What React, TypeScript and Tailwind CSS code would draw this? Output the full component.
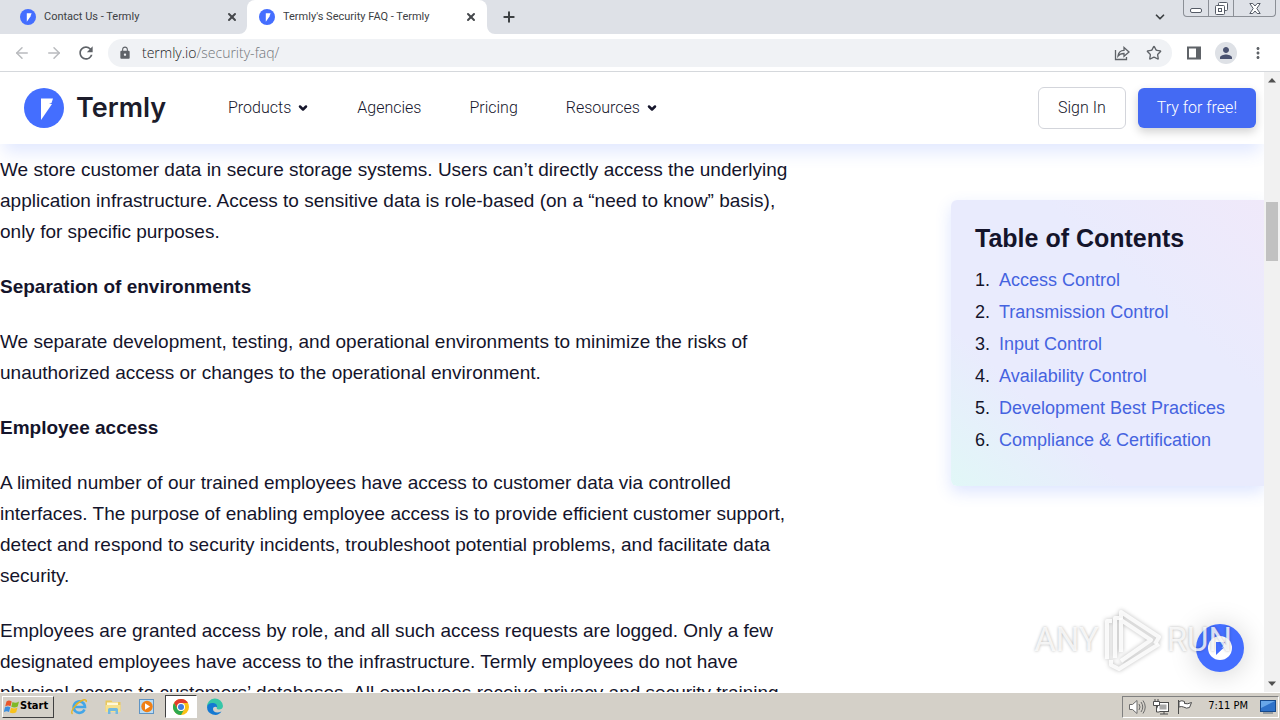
import React from 'react';
import { ArrowLeft, ArrowRight, Plus, X, ChevronDown, Star } from 'lucide-react';
import { MdRefresh, MdLock, MdPerson, MdMoreVert } from 'react-icons/md';

const tocItems = [
  { label: 'Access Control', href: '#access-control' },
  { label: 'Transmission Control', href: '#transmission-control' },
  { label: 'Input Control', href: '#input-control' },
  { label: 'Availability Control', href: '#availability-control' },
  { label: 'Development Best Practices', href: '#best-practices' },
  { label: 'Compliance & Certification', href: '#compliance' },
];

const navItems = [
  { label: 'Products', menu: true },
  { label: 'Agencies', menu: false },
  { label: 'Pricing', menu: false },
  { label: 'Resources', menu: true },
];

function TermlyMark({ className }: { className: string }) {
  return (
    <svg viewBox="0 0 40 40" className={className} aria-hidden="true">
      <circle cx="20" cy="20" r="20" fill="#446eff" />
      <path d="M17 10.500h12l-1.500 4.500-2.500 1h3L17 32z" fill="#fff" />
    </svg>
  );
}

function Tab({ title, active }: { title: string; active?: boolean }) {
  return (
    <div
      className={`relative flex items-center h-full w-60 shrink-0 pl-3 pr-[10px] ${
        active ? 'bg-white rounded-t-lg' : ''
      }`}
    >
      {active && (
        <>
          <svg viewBox="0 0 8 8" className="absolute bottom-0 -left-2 w-2 h-2 fill-white">
            <path d="M8 0v8H0a8 8 0 0 0 8-8z" />
          </svg>
          <svg viewBox="0 0 8 8" className="absolute bottom-0 -right-2 w-2 h-2 fill-white">
            <path d="M0 0v8h8a8 8 0 0 1-8-8z" />
          </svg>
        </>
      )}
      <TermlyMark className="w-4 h-4 mr-2 shrink-0" />
      <span className="flex-1 truncate text-[11px] text-[#3c4043] font-['Roboto',sans-serif]">{title}</span>
      <button aria-label="Close tab" className="text-[#45484c]">
        <X className="w-3 h-3" strokeWidth={4} />
      </button>
    </div>
  );
}

function WindowControls() {
  return (
    <div className="flex h-[17px] mr-1 border border-t-0 border-[#8b8f96] rounded-b-[4px] divide-x divide-[#8b8f96]">
      <button aria-label="Minimize" className="w-[25px] flex items-center justify-center">
        <svg viewBox="0 0 12 12" className="w-3 h-3" fill="#fff" stroke="#555b66">
          <rect x=".5" y="6.500" width="11" height="4" rx="1.500" />
        </svg>
      </button>
      <button aria-label="Restore" className="w-[25px] flex items-center justify-center">
        <svg viewBox="0 0 13 13" className="w-[13px] h-[13px]" fill="#fff" stroke="#555b66">
          <rect x="3.500" y=".5" width="9" height="8" rx="1" />
          <rect x=".5" y="3.500" width="9" height="9" rx="1" />
          <rect x="3.500" y="6.500" width="3" height="3" />
        </svg>
      </button>
      <button aria-label="Close" className="w-[41px] flex items-center justify-center">
        <svg viewBox="0 0 12 11" className="w-3 h-[11px]" fill="#fff" stroke="#555b66">
          <path d="M.8.5h3L6 3l2.200-2.500h3L7.800 5.500l3.400 5h-3L6 8l-2.200 2.500h-3l3.400-5z" />
        </svg>
      </button>
    </div>
  );
}

function BrowserBar() {
  return (
    <div className="shrink-0">
      <div className="flex h-[34px] bg-[#dee1e7]">
        <div className="flex pl-2 flex-1 min-w-0">
          <Tab title="Contact Us - Termly" />
          <div className="-ml-px">
            <Tab title="Termly's Security FAQ - Termly" active />
          </div>
          <button aria-label="New tab" className="ml-[14px] text-[#3c4043]">
            <Plus className="w-4 h-4" strokeWidth={3} />
          </button>
        </div>
        <button aria-label="Search tabs" className="mr-4 text-[#3c4043]">
          <ChevronDown className="w-[14px] h-[14px]" strokeWidth={3} />
        </button>
        <WindowControls />
      </div>

      <div className="flex items-center h-[38px] pl-3 pr-[13px] bg-white border-b border-[#d5d8dc] text-[#5f6368]">
        <button aria-label="Back" className="w-5 mr-3 flex justify-center text-[#b9bbbe]">
          <ArrowLeft className="w-[18px] h-[18px]" />
        </button>
        <button aria-label="Forward" className="w-5 mr-3 flex justify-center text-[#b9bbbe]">
          <ArrowRight className="w-[18px] h-[18px]" />
        </button>
        <button aria-label="Reload" className="w-5 mr-3 flex justify-center">
          <MdRefresh className="w-5 h-5" />
        </button>
        <div className="flex flex-1 items-center h-7 px-[10px] rounded-full bg-[#f0f2f5]">
          <MdLock className="w-[14px] h-[14px] mr-[10px]" />
          <a
            href="#url"
            className="flex-1 text-sm font-light text-[#70757a] font-['Open_Sans',sans-serif]"
          >
            <span className="text-[#202124]">termly.io</span>/security-faq/
          </a>
          <button aria-label="Share" className="mr-4">
            <svg viewBox="0 0 16 16" className="w-4 h-4" fill="none" stroke="currentColor" strokeWidth="1.3">
              <path d="M1.500 5v9.500h11V12" />
              <path d="M4 11c.5-4 2.500-5.500 6-5.600V2.500L15 7l-5 4.300V8.500C7.500 8.500 5.500 9 4 11z" />
            </svg>
          </button>
          <button aria-label="Bookmark">
            <Star className="w-4 h-4" strokeWidth={2} />
          </button>
        </div>
        <button aria-label="Side panel" className="ml-[14px] mr-[13px]">
          <svg viewBox="0 0 16 16" className="w-4 h-4" fill="currentColor">
            <path d="M1 1.500h14v13H1zM3 3.500v9h7v-9z" fillRule="evenodd" />
          </svg>
        </button>
        <button
          aria-label="Profile"
          className="w-[22px] h-[22px] rounded-full bg-[#dee1e6] text-[#4a5270] flex items-center justify-center"
        >
          <MdPerson className="w-[18px] h-[18px]" />
        </button>
        <button aria-label="Menu" className="ml-3">
          <MdMoreVert className="w-[18px] h-[18px]" />
        </button>
      </div>
    </div>
  );
}

function SiteHeader() {
  return (
    <header className="relative z-10 flex items-center h-[72px] shrink-0 pl-6 pr-2 bg-white shadow-[0_12px_16px_-4px_rgba(68,110,255,0.16)] font-light text-[#15152b] font-['Roboto',sans-serif]">
      <a href="#home" className="flex items-center w-[204px] shrink-0">
        <TermlyMark className="w-10 h-10 mr-3" />
        <span className="text-[27px] leading-8 font-semibold text-[#1c1c2b] font-['Inter',sans-serif]">Termly</span>
      </a>
      <nav className="flex flex-1 gap-12 text-base">
        {navItems.map((item) =>
          item.menu ? (
            <button key={item.label} className="flex items-center gap-[6px]">
              {item.label}
              <ChevronDown className="w-3 h-3" strokeWidth={5} />
            </button>
          ) : (
            <a key={item.label} href={`#${item.label.toLowerCase()}`}>
              {item.label}
            </a>
          )
        )}
      </nav>
      <a href="#sign-in" className="border border-[#d3d5db] rounded-md px-[19px] py-2 mr-3 text-base">
        Sign In
      </a>
      <a href="#try" className="rounded-md px-[19px] py-2 text-base text-white bg-[#446af3] shadow-[0_4px_10px_rgba(0,0,0,0.18)]">
        Try for free!
      </a>
    </header>
  );
}

function Article() {
  return (
    <article className="flex flex-col gap-6 flex-1 max-w-[800px] pt-[10px] text-[19px] leading-[31px] text-[#14142b]">
      <p>
        We store customer data in secure storage systems. Users can’t directly access the underlying
        application infrastructure. Access to sensitive data is role-based (on a “need to know” basis),
        only for specific purposes.
      </p>
      <h3 className="font-bold">Separation of environments</h3>
      <p>
        We separate development, testing, and operational environments to minimize the risks of
        unauthorized access or changes to the operational environment.
      </p>
      <h3 className="font-bold">Employee access</h3>
      <p>
        A limited number of our trained employees have access to customer data via controlled
        interfaces. The purpose of enabling employee access is to provide efficient customer support,
        detect and respond to security incidents, troubleshoot potential problems, and facilitate data
        security.
      </p>
      <p>
        Employees are granted access by role, and all such access requests are logged. Only a few
        designated employees have access to the infrastructure. Termly employees do not have
        physical access to customers’ databases. All employees receive privacy and security training
      </p>
    </article>
  );
}

function TableOfContents() {
  return (
    <aside className="w-[313px] shrink-0 mt-14 h-[286px] pl-6 pt-5 rounded-l-md shadow-[0_6px_16px_rgba(68,110,255,0.18)] bg-[linear-gradient(to_top_right,#e1f7f7_0%,#e9ebfd_28%,#e9ebfd_65%,#f0e9fa_100%)]">
      <h2 className="text-[25px] leading-9 font-bold text-[#14142b] mb-2">Table of Contents</h2>
      <ol className="text-[18px] leading-8 text-[#14142b]">
        {tocItems.map((item, i) => (
          <li key={item.href} className="flex">
            <span className="w-6">{i + 1}.</span>
            <a href={item.href} className="text-[#4563e0]">
              {item.label}
            </a>
          </li>
        ))}
      </ol>
    </aside>
  );
}

function Scrollbar() {
  return (
    <div className="flex flex-col items-center justify-between w-4 shrink-0 py-[6px] bg-[#f1f1f1]">
      <svg viewBox="0 0 8 5" className="w-2 h-[5px]" fill="#505050">
        <path d="M4 0l4 4.500H0z" />
      </svg>
      <div className="flex-1 flex flex-col">
        <div className="flex-[119]" />
        <div className="w-3 flex-[59] bg-[#c1c1c1]" />
        <div className="flex-[420]" />
      </div>
      <svg viewBox="0 0 8 5" className="w-2 h-[5px]" fill="#505050">
        <path d="M4 5l4-4.500H0z" />
      </svg>
    </div>
  );
}

function Watermark() {
  return (
    <div className="absolute z-30 right-8 bottom-5 flex items-center pointer-events-none text-white/80 font-['Roboto',sans-serif] text-[33px] leading-[64px] [text-shadow:0_0_3px_rgba(0,0,0,0.3)]">
      <span>ANY</span>
      <svg
        viewBox="0 0 60 64"
        className="w-[60px] h-16 mx-1 drop-shadow-[0_0_2px_rgba(0,0,0,0.3)]"
        fill="none"
        stroke="#fff"
        strokeOpacity=".85"
        strokeWidth="4"
        strokeLinejoin="round"
      >
        <path d="M4 51V13h5M12 50V10h6V4l38 25-4 7" />
        <path d="M18 10v34M18 12l30 20-30 21M8 52v5l8 4 40-25" />
      </svg>
      <span>RUN</span>
    </div>
  );
}

function ChatButton() {
  return (
    <button
      aria-label="Open chat"
      className="absolute z-20 right-5 bottom-5 w-12 h-12 rounded-full bg-[#446eff] flex items-center justify-center shadow-[0_2px_28px_rgba(0,0,0,0.18)]"
    >
      <svg viewBox="0 0 24 24" className="w-6 h-6">
        <circle cx="12" cy="12" r="12" fill="#fff" />
        <path d="M8 6h9l-1.500 4-2 1.500h2.500L8 19z" fill="#446eff" />
      </svg>
    </button>
  );
}

function Taskbar() {
  return (
    <footer className="flex items-center h-7 shrink-0 pl-[2px] bg-[#d4d0c8] border-t border-white font-['DejaVu_Sans_Condensed','DejaVu_Sans',sans-serif] text-[11px] text-black">
      <button className="flex items-center h-[22px] w-[52px] pl-px mr-4 border border-t-white border-l-white border-r-[#404040] border-b-[#404040] font-bold">
        <svg viewBox="0 0 16 16" className="w-4 h-4 shrink-0">
          <path d="M2.500 2.500C4.500 1 6 1.500 7.700 2.500L6.500 7.300C5 6.200 3 6.200 1.200 7.500z" fill="#e8562a" />
          <path d="M8.500 3c2 1 4 1 6.500-.5l-1.300 5c-2 1.300-4.200 1.300-6.400.3z" fill="#7fb928" />
          <path d="M1 8.300C3 7 4.500 7.200 6.300 8.200L5 13C3.500 12 1.800 12-.2 13z" fill="#3b8ede" />
          <path d="M7.100 8.700c2 1 4.200 1 6.400-.3l-1.300 4.800c-2 1.300-4.300 1.300-6.400.3z" fill="#f8c21c" />
        </svg>
        Start
      </button>
      <button aria-label="Internet Explorer" className="w-[18px] h-[18px] mr-4">
        <svg viewBox="0 0 18 18" fill="none">
          <path d="M14.500 11.500A5.700 5.700 0 1 1 15 9H5" stroke="#43a6e8" strokeWidth="2.600" />
          <path d="M2.500 16C0 14 5 6 11 3c4-2 6-1.500 5 1" stroke="#e6b422" strokeWidth="1.400" />
        </svg>
      </button>
      <button aria-label="Explorer" className="w-[18px] h-[18px] mr-4">
        <svg viewBox="0 0 18 18">
          <path d="M1.500 2.500h6l1 1.500h8v9h-15z" fill="#e9c85c" />
          <path d="M3 4.500h11v3H3z" fill="#fff8d8" />
          <path d="M1.500 7h15v7h-15z" fill="#f6e08d" />
          <path d="M4 16v-4.500a1.500 1.500 0 0 1 1.500-1.500h7a1.500 1.500 0 0 1 1.500 1.500V16h-2.500v-3h-5v3z" fill="#72b9df" />
        </svg>
      </button>
      <button aria-label="Media Player" className="w-[18px] h-[18px] mr-[9px]">
        <svg viewBox="0 0 18 18">
          <rect x="1.500" y="1.500" width="14" height="14" fill="#b9dcf5" stroke="#5f94c4" />
          <circle cx="9" cy="8.500" r="5.700" fill="#f08016" />
          <path d="M7 5.200v6.600l5-3.300z" fill="#fff" />
        </svg>
      </button>
      <button
        aria-label="Chrome"
        className="w-8 h-[23px] mr-[9px] flex items-center justify-center bg-white border border-t-[#404040] border-l-[#404040] border-r-white border-b-white"
      >
        <svg viewBox="0 0 16 16" className="w-4 h-4">
          <circle cx="8" cy="8" r="8" fill="#fbc116" />
          <path d="M1.070 4A8 8 0 0 1 14.930 4H8a4 4 0 0 0-3.460 6z" fill="#e33b2e" />
          <path d="M1.070 4A8 8 0 0 0 8 16l3.460-6a4 4 0 0 1-6.920 0z" fill="#2da94f" />
          <circle cx="8" cy="8" r="4" fill="#fff" />
          <circle cx="8" cy="8" r="3" fill="#3f7de0" />
        </svg>
      </button>
      <button aria-label="Edge" className="w-[18px] h-[18px]">
        <svg viewBox="0 0 18 18">
          <path d="M1 9a8 8 0 0 1 16-1c0 2.500-2 3.500-4 3.500-2.200 0-2.500-1-2-2C11.500 7 9 5.500 6.500 6 3.500 6.500 1.500 8 1 9z" fill="#36c6a8" />
          <path d="M1 9c.5-3 3.500-4.500 6.500-4 3 .5 4 2.500 3.500 4.500-1-1.500-4-1-4 1.500 0 3 3.500 4.500 8.500 2.500A8 8 0 0 1 1 9z" fill="#1479d2" />
        </svg>
      </button>

      <div className="flex items-center h-[22px] ml-auto mr-px pl-[5px] pr-[2px] border border-t-[#808080] border-l-[#808080] border-r-white border-b-white">
        <svg viewBox="0 0 18 18" className="w-[18px] h-[18px] mr-[6px]" fill="#fff" stroke="#6b6b6b">
          <path d="M1.500 6.500h3L9 2.500v13l-4.500-4h-3z" />
          <path d="M11 6q2 3 0 6M13 4q3.500 5 0 10M15 2.500q4.500 6.500 0 13" fill="none" />
        </svg>
        <svg viewBox="0 0 18 18" className="w-[18px] h-[18px] mr-[6px]" fill="#fff" stroke="#4c4c4c">
          <rect x="5.500" y="4.500" width="11" height="9" fill="#fff" />
          <rect x="7.500" y="6.500" width="7" height="5" fill="#a8a8a8" stroke="none" />
          <path d="M8 16h8M12 13.500V16" />
          <path d="M1.500 3.500h6v4h-6zM3 1v2.500M6 1v2.500M4.500 7.500V14h3" />
        </svg>
        <svg viewBox="0 0 18 18" className="w-[18px] h-[18px] mr-[14px]" fill="#fff" stroke="#4c4c4c">
          <path d="M2.500 2v14" />
          <path d="M3 3.500q3-1.500 5.500 0v2q3 1 7-1l-2 5q-3 1.500-6-.5-2-1-4.500 0z" />
        </svg>
        <span className="mr-3">7:11 PM</span>
        <svg viewBox="0 0 16 14" className="w-4 h-[14px]">
          <rect x=".5" y=".5" width="15" height="11" fill="#2f72c9" stroke="#174a8c" />
          <path d="M1 1h14L1 8z" fill="#69a7e8" />
          <path d="M3 13h10" stroke="#5a6a7c" />
        </svg>
      </div>
    </footer>
  );
}

export default function App() {
  return (
    <div className="flex flex-col h-screen overflow-hidden bg-white font-['Liberation_Sans',Arial,sans-serif]">
      <BrowserBar />
      <div className="flex flex-1 min-h-0">
        <div className="relative flex flex-col flex-1 min-w-0 overflow-hidden">
          <SiteHeader />
          <main className="flex flex-1 min-h-0 items-start justify-between">
            <Article />
            <TableOfContents />
          </main>
          <ChatButton />
          <Watermark />
        </div>
        <Scrollbar />
      </div>
      <Taskbar />
    </div>
  );
}
